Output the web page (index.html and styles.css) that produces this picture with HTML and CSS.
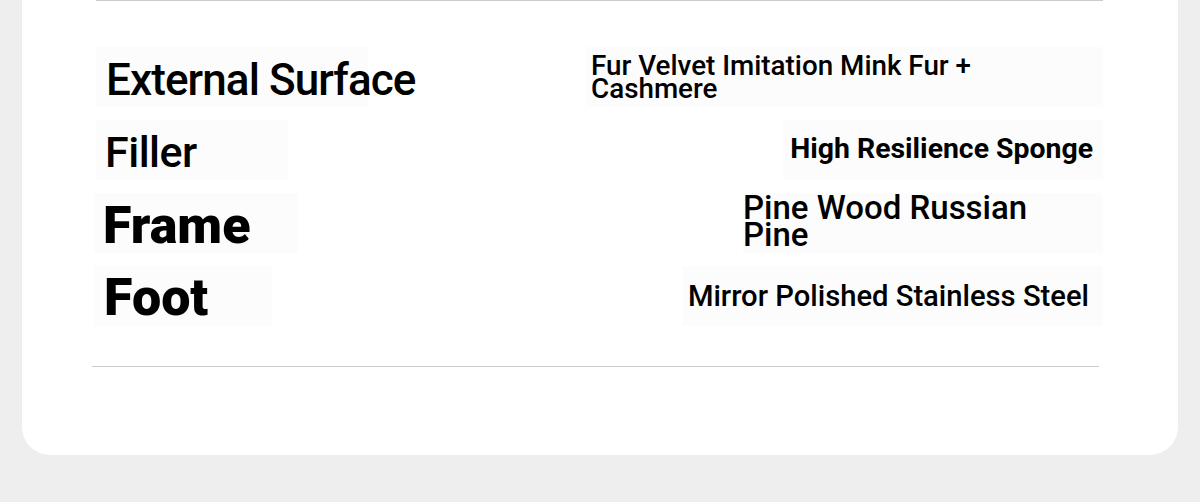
FILE: index.html
```html
<!DOCTYPE html>
<html lang="en">
<head>
<meta charset="utf-8">
<title>Material</title>
<link rel="stylesheet" href="styles.css">
</head>
<body>
<div class="card">
  <div class="specs">
    <div class="row row-1">
      <div class="label label-1">External Surface</div>
      <div class="value value-1">Fur Velvet Imitation Mink Fur + Cashmere</div>
    </div>
    <div class="row row-2">
      <div class="label label-2">Filler</div>
      <div class="value value-2">High Resilience Sponge</div>
    </div>
    <div class="row row-3">
      <div class="label label-3">Frame</div>
      <div class="value value-3">Pine Wood Russian Pine</div>
    </div>
    <div class="row row-4">
      <div class="label label-4">Foot</div>
      <div class="value value-4">Mirror Polished Stainless Steel</div>
    </div>
  </div>
  <div class="rule"></div>
</div>
</body>
</html>
```
FILE: styles.css
```css
html, body {
  margin: 0;
  padding: 0;
}
body {
  background: #eeeeee;
  font-family: Roboto, "Liberation Sans", Arial, sans-serif;
  color: #000;
  width: 1200px;
  height: 502px;
  overflow: hidden;
}
.card {
  margin-left: 22px;
  width: 1156px;
  height: 455px;
  background: #ffffff;
  border-radius: 0 0 28px 28px;
}
.specs {
  margin-left: 74px;
  width: 1007px;
  border-top: 1px solid #cccccc;
  padding-top: 46px;
  display: flex;
  flex-direction: column;
  gap: 13px;
}
.row {
  display: flex;
  justify-content: space-between;
  align-items: stretch;
  height: 60px;
}
.label {
  display: flex;
  align-items: center;
  background: #fcfcfc;
  line-height: 1;
  white-space: nowrap;
  box-sizing: border-box;
}
.value {
  display: flex;
  align-items: center;
  background: #fcfcfc;
  box-sizing: border-box;
}
.label-1 {
  font-size: 44px;
  font-weight: 500;
  letter-spacing: -0.9px;
  padding-left: 10px;
  padding-top: 5px;
  width: 272px;
}
.label-2 {
  font-size: 43px;
  font-weight: 500;
  letter-spacing: -0.5px;
  padding-left: 9px;
  padding-top: 5px;
  width: 192px;
}
.label-3 {
  font-size: 52px;
  font-weight: 900;
  padding-left: 9px;
  padding-top: 5px;
  width: 204px;
  margin-left: -2px;
}
.label-4 {
  font-size: 52px;
  font-weight: 900;
  padding-left: 10px;
  padding-top: 4px;
  width: 178px;
  margin-left: -2px;
}
.value-1 {
  font-size: 27.8px;
  font-weight: 500;
  line-height: 23px;
  width: 517px;
  padding-left: 5px;
  padding-right: 110px;
}
.value-2 {
  font-size: 28.4px;
  font-weight: 700;
  justify-content: flex-end;
  padding-right: 10px;
  padding-bottom: 3px;
  width: 320px;
}
.value-3 {
  font-size: 33px;
  font-weight: 500;
  line-height: 27px;
  width: 360px;
  padding-right: 50px;
  padding-bottom: 4px;
}
.value-4 {
  font-size: 29.2px;
  font-weight: 500;
  justify-content: flex-end;
  padding-right: 14px;
  width: 420px;
}
.rule {
  margin-top: 40px;
  margin-left: 70px;
  width: 1007px;
  height: 1px;
  background: #cccccc;
}
```
